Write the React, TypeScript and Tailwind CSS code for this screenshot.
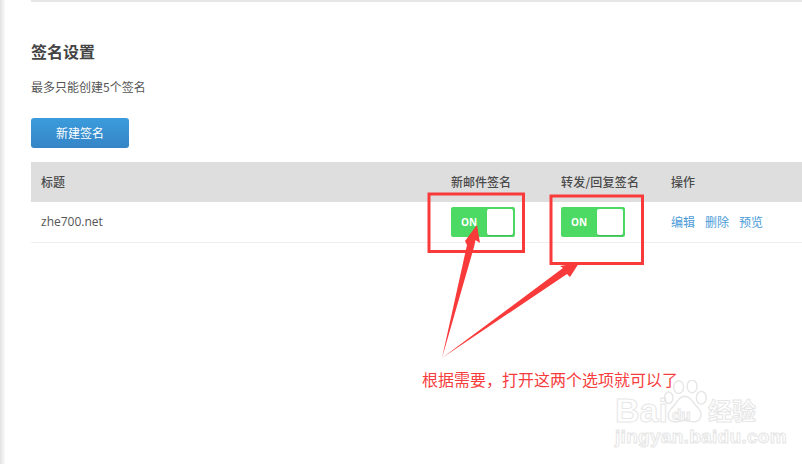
function Toggle() {
  return (
    <div className="flex h-[30px] w-[64px] items-center justify-between rounded-[2px] bg-[#4cd964] pl-[10px] pr-[2px]">
      <span className="font-['Open_Sans',sans-serif] text-[10px] font-bold text-white">ON</span>
      <span className="h-[26px] w-[26px] rounded-[2px] bg-white shadow-[0_1px_1px_rgba(0,0,0,0.15)]" />
    </div>
  );
}

function Annotations() {
  return (
    <>
      <svg className="absolute left-0 top-0" width="802" height="464" viewBox="0 0 802 464">
        <rect x="429" y="194" width="94.5" height="57.5" fill="none" stroke="#f93a3a" strokeWidth="3" />
        <rect x="551" y="196" width="91.5" height="67.5" fill="none" stroke="#f93a3a" strokeWidth="3" />
        <polygon points="442,358 467,245 465,241 477,225 480,243 475.5,240 474,247" fill="#f93a3a" />
        <polygon points="442,358 563,268 560,266 579,263 570,277 567,274" fill="#f93a3a" />
      </svg>
      <div className="absolute left-[422px] top-[368px] whitespace-nowrap text-[16px] leading-[22px] text-[#f63c3c]">
        根据需要，打开这两个选项就可以了
      </div>
    </>
  );
}

function Watermark() {
  return (
    <div className="absolute left-[612px] top-[380px] h-[70px] w-[190px] font-['Liberation_Sans','Noto_Sans_CJK_SC',sans-serif] text-transparent [-webkit-text-stroke:1px_#e6e6e6]">
      <div className="absolute left-[3px] top-[13px] text-[34px] font-bold leading-[34px]">Bai</div>
      <svg className="absolute left-[51px] top-[0px]" width="44" height="44" viewBox="0 0 62 62" fill="none" stroke="#e6e6e6" strokeWidth="2">
        <ellipse cx="22" cy="10" rx="7" ry="9" />
        <ellipse cx="41" cy="9" rx="7" ry="9" />
        <ellipse cx="8" cy="25" rx="6" ry="8" />
        <ellipse cx="54" cy="25" rx="7" ry="9" />
        <path d="M30 23c9 0 12 9 20 17c7 8 3 19-7 19c-5 0-8-2-13-2s-9 3-14 2c-10-1-11-11-5-18c8-6 10-18 19-18z" />
      </svg>
      <div className="absolute left-[60px] top-[26px] text-[15px] font-bold leading-[18px]">du</div>
      <div className="absolute left-[96px] top-[17px] text-[24px] font-bold leading-[30px]">经验</div>
      <div className="absolute left-[3px] top-[47px] text-[19px] font-bold leading-[20px] tracking-[0.3px]">jingyan.baidu.com</div>
    </div>
  );
}

export default function App() {
  return (
    <div className="relative flex h-[464px] w-[802px] overflow-hidden bg-white font-['Noto_Sans_CJK_SC','Liberation_Sans',sans-serif] text-[#555]">
      <div className="w-[6px] shrink-0 bg-gradient-to-r from-[#e2e2e2] to-white" />
      <main className="flex min-w-0 flex-1 flex-col pl-[25px]">
        <div className="h-[2px] bg-[#e6e6e6]" />
        <h2 className="mt-[37px] text-[16px] font-bold leading-[24px] text-[#444]">签名设置</h2>
        <p className="mt-[14px] text-[12px] leading-[20px] text-[#555]">最多只能创建5个签名</p>
        <button className="mt-[21px] h-[30px] w-[98px] rounded-[3px] bg-gradient-to-b from-[#3b9cdc] to-[#3585c6] text-[12px] text-white">
          新建签名
        </button>
        <div className="mt-[14px]">
          <div className="grid h-[40px] grid-cols-[420px_110px_110px_1fr] items-center bg-[#dedede] text-[12px] font-medium text-[#4a4a4a]">
            <span className="pl-[10px]">标题</span>
            <span>新邮件签名</span>
            <span className="tracking-[0.2px]">转发/回复签名</span>
            <span>操作</span>
          </div>
          <div className="grid h-[41px] grid-cols-[420px_110px_110px_1fr] items-center border-b border-[#eeeeee] text-[12px]">
            <span className="pl-[10px] font-['Open_Sans',sans-serif] text-[#555]">zhe700.net</span>
            <Toggle />
            <Toggle />
            <span className="flex gap-[10px] text-[#4a9bd8]">
              <span>编辑</span>
              <span>删除</span>
              <span>预览</span>
            </span>
          </div>
        </div>
      </main>
      <Annotations />
      <Watermark />
    </div>
  );
}
